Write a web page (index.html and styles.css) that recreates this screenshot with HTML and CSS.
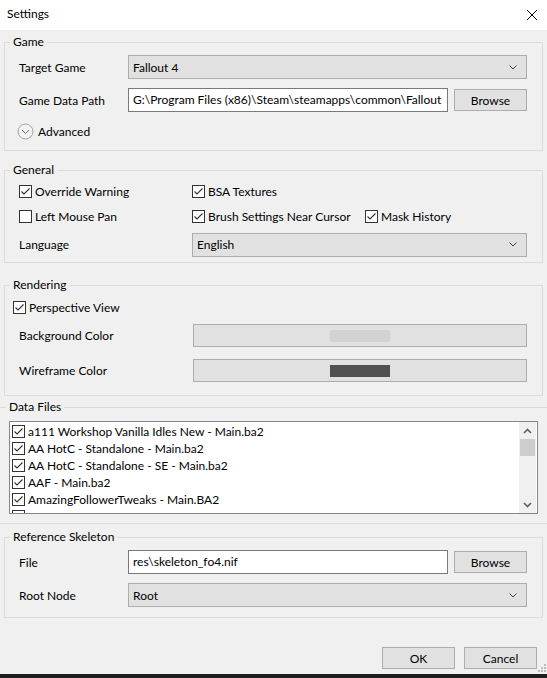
FILE: index.html
```html
<!DOCTYPE html>
<html lang="en">
  <head>
    <meta charset="UTF-8" />
    <meta name="viewport" content="width=device-width, initial-scale=1.0" />
    <title>Settings</title>
    <link rel="stylesheet" href="styles.css">
  </head>
  <body>
    <div class="window">
      <div class="titlebar">
        <span>Settings</span>
        <svg class="close" width="10" height="10" viewBox="0 0 10 10">
          <path d="M0 0L10 10M10 0L0 10" stroke="#000" stroke-width="1" fill="none" />
        </svg>
      </div>

      <!-- Game -->
      <div class="group game">
        <div class="group-title">Game</div>
        <div class="row first">
          <span class="label">Target Game</span>
          <div class="combo">
            <span>Fallout 4</span>
            <svg class="chevron" width="8" height="5" viewBox="0 0 8 5"><path d="M0.5 0.5L4 4L7.5 0.5" /></svg>
          </div>
        </div>
        <div class="row path">
          <span class="label">Game Data Path</span>
          <div class="edit">G:\Program Files (x86)\Steam\steamapps\common\Fallout</div>
          <button class="btn browse">Browse</button>
        </div>
        <div class="advanced">
          <svg width="17" height="17" viewBox="0 0 17 17">
            <circle cx="8.5" cy="8.5" r="7.5" fill="#f3f3f3" stroke="#a2a2a2" />
            <path d="M5 7L8.5 10.5L12 7" fill="none" stroke="#707070" />
          </svg>
          <span>Advanced</span>
        </div>
      </div>

      <!-- General -->
      <div class="group general">
        <div class="group-title">General</div>
        <div class="grid">
          <label class="check"><span class="box on"></span>Override Warning</label>
          <label class="check"><span class="box on"></span>BSA Textures</label>
          <span></span>
          <label class="check"><span class="box"></span>Left Mouse Pan</label>
          <label class="check"><span class="box on"></span>Brush Settings Near Cursor</label>
          <label class="check"><span class="box on"></span>Mask History</label>
          <span class="label">Language</span>
          <div class="combo span2">
            <span>English</span>
            <svg class="chevron" width="8" height="5" viewBox="0 0 8 5"><path d="M0.5 0.5L4 4L7.5 0.5" /></svg>
          </div>
        </div>
      </div>

      <!-- Rendering -->
      <div class="group rendering">
        <div class="group-title">Rendering</div>
        <label class="check perspective"><span class="box on"></span>Perspective View</label>
        <div class="row color-row bg">
          <span class="label wide">Background Color</span>
          <button class="btn color"><span class="swatch light"></span></button>
        </div>
        <div class="row color-row wire">
          <span class="label wide">Wireframe Color</span>
          <button class="btn color"><span class="swatch dark"></span></button>
        </div>
      </div>

      <!-- Data Files -->
      <div class="group flat">
        <div class="group-title">Data Files</div>
        <div class="list">
          <div class="items">
            <label class="check item"><span class="box on"></span>a111 Workshop Vanilla Idles New - Main.ba2</label>
            <label class="check item"><span class="box on"></span>AA HotC - Standalone - Main.ba2</label>
            <label class="check item"><span class="box on"></span>AA HotC - Standalone - SE - Main.ba2</label>
            <label class="check item"><span class="box on"></span>AAF - Main.ba2</label>
            <label class="check item"><span class="box on"></span>AmazingFollowerTweaks - Main.BA2</label>
            <label class="check item"><span class="box on"></span></label>
          </div>
          <div class="scrollbar">
            <div class="arrow">
              <svg width="9" height="6" viewBox="0 0 9 6"><path d="M1 5L4.5 1.5L8 5" /></svg>
            </div>
            <div class="thumb"></div>
            <div class="track"></div>
            <div class="arrow">
              <svg width="9" height="6" viewBox="0 0 9 6"><path d="M1 1L4.5 4.5L8 1" /></svg>
            </div>
          </div>
        </div>
      </div>

      <!-- Reference Skeleton -->
      <div class="group skeleton">
        <div class="group-title">Reference Skeleton</div>
        <div class="row first">
          <span class="label">File</span>
          <div class="edit">res\skeleton_fo4.nif</div>
          <button class="btn browse">Browse</button>
        </div>
        <div class="row root">
          <span class="label">Root Node</span>
          <div class="combo">
            <span>Root</span>
            <svg class="chevron" width="8" height="5" viewBox="0 0 8 5"><path d="M0.5 0.5L4 4L7.5 0.5" /></svg>
          </div>
        </div>
      </div>

      <div class="footer">
        <button class="btn action">OK</button>
        <button class="btn action">Cancel</button>
        <svg class="grip" width="10" height="10" viewBox="0 0 10 10">
          <rect x="7" y="1" width="2" height="2" />
          <rect x="4" y="4" width="2" height="2" />
          <rect x="7" y="4" width="2" height="2" />
          <rect x="1" y="7" width="2" height="2" />
          <rect x="4" y="7" width="2" height="2" />
          <rect x="7" y="7" width="2" height="2" />
        </svg>
      </div>
      <div class="taskbar"></div>
    </div>
  </body>
</html>
```

FILE: styles.css
```css
* {
  margin: 0;
  padding: 0;
  box-sizing: border-box;
}
html,
body {
  width: 100%;
  height: 100%;
  overflow: hidden;
}
body {
  font-family: "Lato", "Noto Sans", sans-serif;
  font-size: 12px;
  color: #000;
  background: #f0f0f0;
}
.window {
  display: flex;
  flex-direction: column;
  height: 678px;
}
.titlebar {
  height: 30px;
  flex: none;
  background: #fff;
  display: flex;
  align-items: center;
  justify-content: space-between;
  padding: 0 10px 3px 7px;
}
.titlebar .close {
  margin-top: 2px;
}

/* group boxes */
.group {
  border: 1px solid #dcdcdc;
  margin: 0 4px;
  padding: 0 15px 0 14px;
  flex: none;
}
.group-title {
  width: fit-content;
  line-height: 16px;
  margin: -9px 0 0 -9px;
  padding: 0 3px;
  background: #f0f0f0;
}
.game {
  margin-top: 12px;
  padding-bottom: 9px;
}
.general {
  margin-top: 19px;
  padding-bottom: 6px;
}
.rendering {
  margin-top: 22px;
  padding-bottom: 13px;
}
.flat {
  margin: 11px 0 0 0;
  border-left: none;
  border-right: none;
  padding: 0 9px 9px 9px;
}
.flat .group-title {
  margin-left: -3px;
}
.skeleton {
  margin-top: 13px;
  padding-bottom: 10px;
}

/* rows */
.row {
  display: flex;
  align-items: center;
}
.row.first {
  margin-top: 5px;
}
.row.path {
  margin-top: 9px;
}
.row.root {
  margin-top: 9px;
}
.label {
  width: 109px;
  flex: none;
  white-space: nowrap;
}
.label.wide {
  width: 174px;
}

.combo {
  flex: 1;
  height: 24px;
  background: #e1e1e1;
  border: 1px solid #adadad;
  display: flex;
  align-items: center;
  justify-content: space-between;
  padding: 0 9px 0 4px;
}
.chevron path {
  fill: none;
  stroke: #404040;
  stroke-width: 1;
}
.edit {
  flex: 1;
  height: 24px;
  line-height: 22px;
  background: #fff;
  border: 1px solid #7a7a7a;
  padding: 0 4px;
  white-space: nowrap;
  overflow: hidden;
}
.btn {
  font: inherit;
  color: #000;
  background: #e1e1e1;
  border: 1px solid #adadad;
  height: 22px;
}
.browse {
  width: 73px;
  margin-left: 6px;
  flex: none;
}

.advanced {
  display: flex;
  align-items: center;
  height: 20px;
  margin: 9px 0 0 -2px;
}
.advanced svg {
  margin-right: 4px;
}

/* check boxes */
.check {
  display: flex;
  align-items: center;
  height: 19px;
  white-space: nowrap;
}
.box {
  width: 13px;
  height: 13px;
  flex: none;
  border: 1px solid #333;
  background: #fff;
  margin-right: 3px;
}
.box.on {
  background: #fff url("data:image/svg+xml;utf8,<svg xmlns='http://www.w3.org/2000/svg' width='11' height='11' viewBox='0 0 11 11'><path d='M1.5 5.5L4 8L9.5 2.5' fill='none' stroke='%23333' stroke-width='1.1'/></svg>") no-repeat center;
}

.grid {
  display: grid;
  grid-template-columns: 173px 173px 1fr;
  grid-template-rows: 19px 19px 24px;
  row-gap: 6px;
  align-items: center;
  margin-top: 4px;
}
.grid .label {
  margin-top: 1px;
}
.combo.span2 {
  grid-column: 2 / 4;
  margin-top: 1px;
}

.perspective {
  margin: 5px 0 0 -6px;
}
.color-row.bg {
  margin-top: 7px;
}
.color-row.wire {
  margin-top: 12px;
}
.btn.color {
  flex: 1;
  height: 23px;
  display: flex;
  align-items: center;
  justify-content: center;
}
.swatch {
  width: 60px;
  height: 12px;
}
.swatch.light {
  background: #d2d2d2;
}
.swatch.dark {
  background: #505050;
}

/* data file list */
.list {
  margin-top: 6px;
  height: 93px;
  background: #fff;
  border: 1px solid #828790;
  display: flex;
}
.items {
  flex: 1;
  overflow: hidden;
  padding: 1px 0 0 2px;
}
.check.item {
  height: 17px;
}
.scrollbar {
  width: 17px;
  flex: none;
  background: #f0f0f0;
  display: flex;
  flex-direction: column;
  margin-right: 1px;
}
.arrow {
  height: 17px;
  display: flex;
  align-items: center;
  justify-content: center;
}
.arrow path {
  fill: none;
  stroke: #606060;
  stroke-width: 1.6;
}
.thumb {
  height: 17px;
  margin: 0 1px;
  background: #cdcdcd;
}
.track {
  flex: 1;
}

/* dialog buttons */
.footer {
  margin-top: auto;
  display: flex;
  justify-content: flex-end;
  align-items: flex-end;
  padding-bottom: 1px;
}
.action {
  width: 73px;
  margin: 0 0 4px 9px;
}
.grip {
  fill: #bcbcbc;
}
.taskbar {
  height: 4px;
  flex: none;
  background: #1e1e1e;
}
```
